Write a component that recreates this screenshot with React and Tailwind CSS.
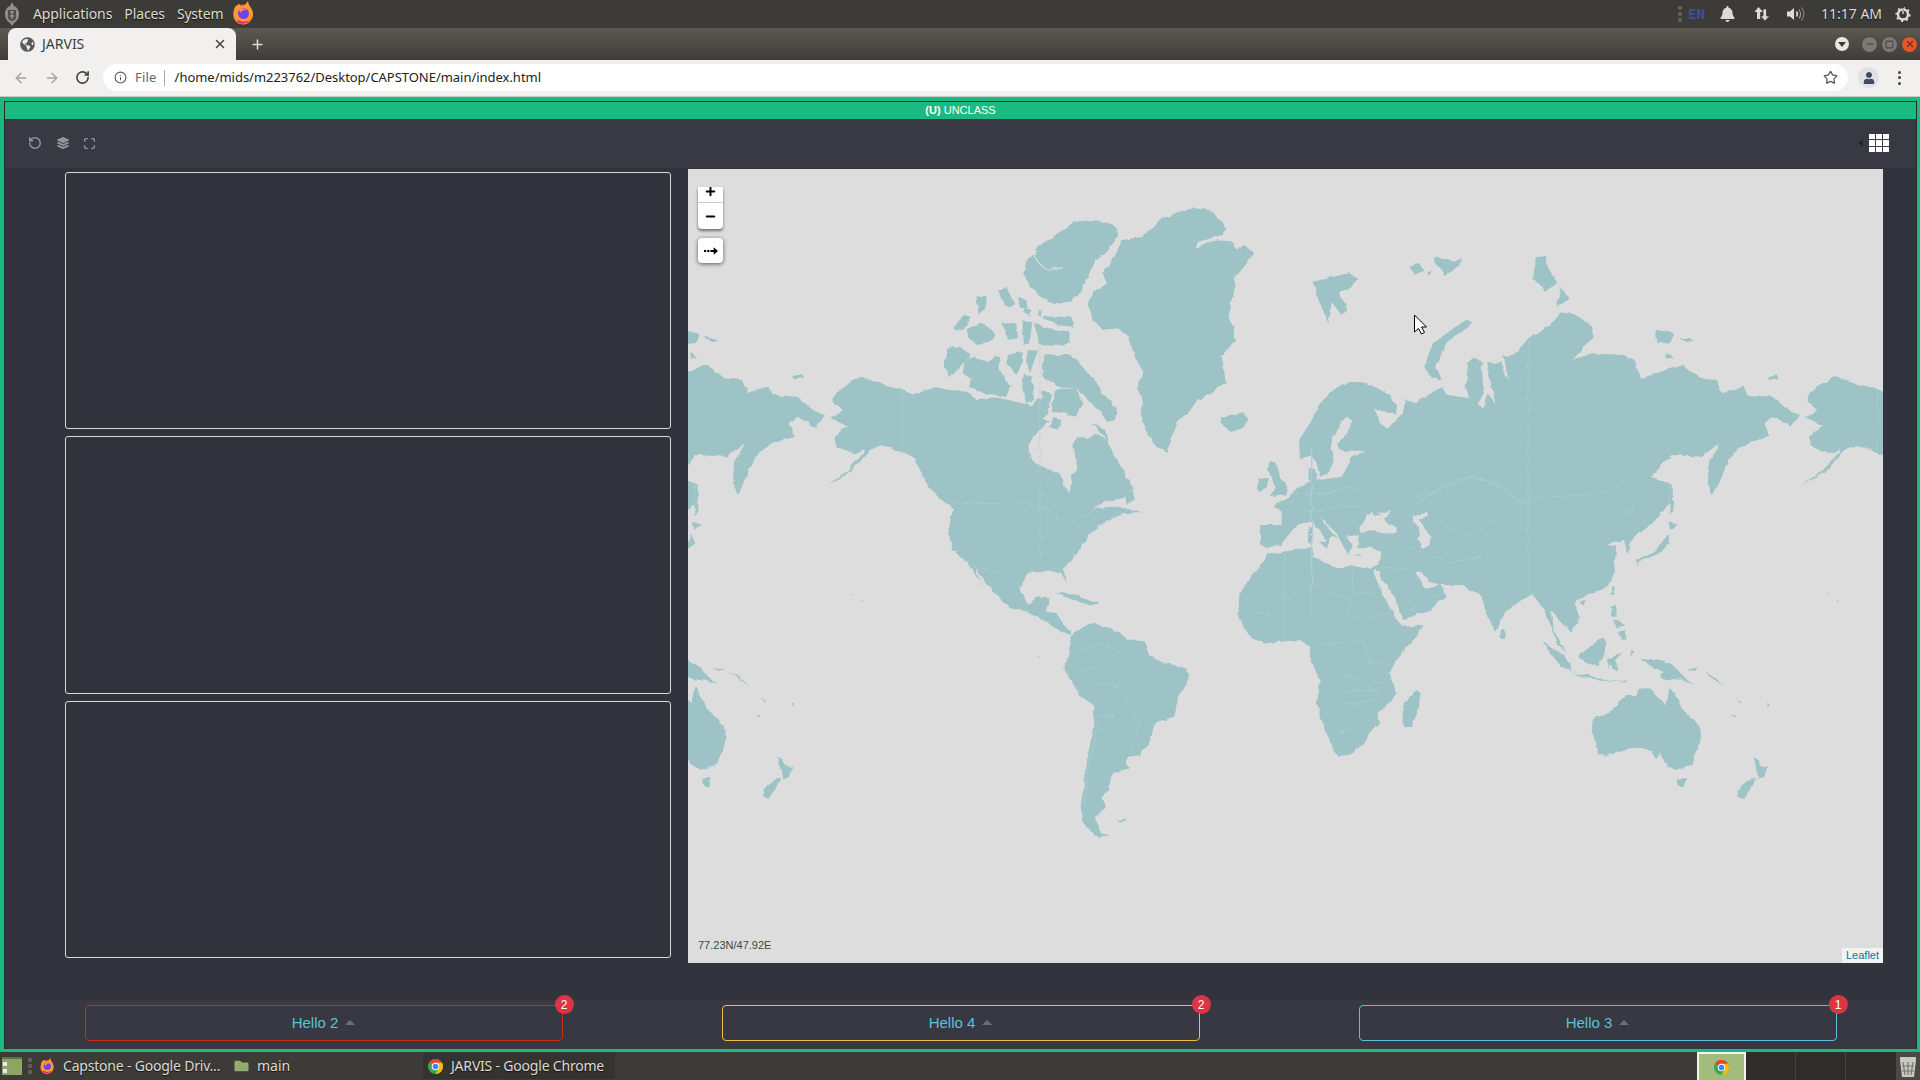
import React from 'react'
import { ArrowLeft, ArrowRight, RotateCw, RotateCcw, Star, X, Plus, Info, Maximize, Minus, Square } from 'lucide-react'
import { FaBell, FaGlobeAmericas, FaLayerGroup, FaUser, FaFolder } from 'react-icons/fa'

// land shapes, traced on crops of the map. each group has its own crop offset/scale
const LAND_Z5 = [
  // greenland
  'M1300,145 1340,150 1365,180 1382,205 1370,225 1345,235 1310,245 1305,265 1340,245 1365,240 1395,245 1405,265 1430,258 1450,280 1430,310 1420,335 1400,350 1405,380 1395,420 1385,470 1400,500 1405,540 1385,570 1370,590 1375,620 1380,670 1340,700 1310,720 1290,750 1255,790 1240,840 1230,875 1205,860 1180,815 1165,760 1170,710 1155,680 1175,640 1150,590 1135,530 1110,505 1070,510 1045,480 1030,430 1045,400 1080,370 1070,340 1090,310 1120,240 1170,230 1215,180 1260,155Z',
  // ellesmere
  'M900,265 955,220 1000,185 1050,180 1095,192 1110,225 1085,268 1055,300 1030,350 1015,395 985,425 950,430 925,420 905,400 885,375 868,340 878,295 900,285Z',
  // arctic islands
  'M690,505 720,465 735,470 725,500 700,515Z',
  'M725,510 765,490 800,520 790,540 750,555 730,530Z',
  'M750,410 775,410 775,445 755,460Z',
  'M805,390 825,385 850,430 835,445 815,425Z',
  'M855,410 875,420 880,445 860,445Z',
  'M815,490 850,490 855,530 830,540Z',
  'M895,490 935,505 985,515 985,550 945,558 910,555Z',
  'M915,470 990,470 995,500 950,495Z',
  'M865,480 890,490 885,550 870,555Z',
  'M870,445 890,450 885,465 870,460Z',
  'M905,450 915,455 912,470 903,465Z',
  'M680,560 715,565 735,590 700,630 680,650 668,620Z',
  'M720,605 745,590 780,610 795,590 810,590 805,620 835,680 825,710 770,700 730,680 740,660 715,640Z',
  'M830,585 865,575 865,610 850,645 825,610Z',
  'M880,570 905,572 885,640 875,600Z',
  'M945,585 990,585 1010,610 1040,650 1070,700 1105,745 1100,780 1080,785 1060,750 1030,720 1000,680 960,680 930,660 915,640 925,590Z',
  'M920,580 945,580 935,640 915,630Z',
  'M870,640 890,650 895,720 875,730 865,680Z',
  'M915,690 940,700 935,745 915,735Z',
  'M945,690 1000,680 1020,730 1000,770 970,760 940,760Z',
  'M945,770 965,780 955,810 935,800Z',
  'M1040,790 1075,810 1085,845 1060,815Z',
  'M1050,860 1085,870 1075,900 1055,895Z',
  // north america
  'M390,705 412,680 455,650 500,668 545,682 592,705 640,680 680,690 720,692 750,718 800,712 860,728 890,735 905,715 925,720 930,760 915,775 935,785 915,805 890,830 880,880 900,912 960,940 972,975 985,1000 992,945 1005,925 995,860 1000,832 1030,838 1050,822 1080,840 1095,880 1130,950 1148,985 1120,1015 1070,1025 1045,1045 1090,1040 1125,1045 1165,1055 1125,1060 1090,1080 1060,1095 1030,1130 1005,1180 970,1225 978,1272 962,1235 925,1235 880,1238 860,1285 880,1335 905,1310 935,1312 925,1355 955,1360 965,1390 990,1415 985,1425 940,1395 885,1360 830,1340 805,1310 770,1265 745,1220 758,1262 778,1297 750,1250 728,1208 690,1170 678,1120 690,1045 650,1010 620,960 590,890 545,870 510,855 480,870 455,905 430,935 395,960 370,975 420,935 445,905 470,870 440,880 395,860 390,830 425,795 378,775 410,750 385,720Z',
  'M1125,1005 1145,990 1150,1020 1130,1035Z',
  'M1060,860 1085,875 1080,900 1055,890Z',
  // st lawrence island and friends
  'M285,650 310,642 312,655 290,658Z',
]

const LAND_Z6 = [
  // siberia to indochina
  'M480,540 470,500 475,430 495,410 510,430 515,520 490,575 510,578 525,520 545,550 530,470 520,425 560,430 580,490 565,410 600,400 630,350 680,320 710,280 745,280 790,320 790,355 740,420 790,400 860,405 890,415 915,475 960,455 1020,435 1060,475 1105,480 1118,520 1170,500 1180,525 1245,530 1285,570 1315,585 1290,620 1245,590 1225,610 1240,650 1190,665 1150,695 1130,730 1095,825 1082,790 1085,730 1115,665 1138,650 1100,680 1065,710 990,705 940,770 985,790 985,850 950,900 890,960 880,1005 870,960 825,970 850,980 845,1050 830,1100 770,1130 745,1150 760,1190 735,1235 700,1190 685,1175 690,1230 725,1300 700,1270 670,1170 640,1120 570,1175 545,1240 510,1135 480,1100 300,800Z',
  // novaya zemlya
  'M470,300 485,310 420,370 395,440 410,480 375,465 365,440 385,370Z',
  // sakhalin, japan
  'M985,790 993,800 995,870 985,885 985,840Z',
  'M980,905 1005,915 985,930Z',
  'M980,940 985,970 960,1000 905,1025 905,1040 900,1020 945,995 970,965Z',
  // severnaya zemlya, svalbard, franz josef
  'M650,110 670,110 680,150 700,190 670,215 640,175Z',
  'M710,200 735,235 700,260Z',
  'M85,185 135,170 175,160 198,175 175,205 150,215 170,270 155,285 130,245 125,310 100,250Z',
  'M330,140 350,130 365,150 340,165Z',
  'M390,110 440,125 460,115 455,135 420,165 395,130Z',
  'M375,155 385,155 382,165 373,163Z',
  // new siberian islands, wrangel
  'M950,330 980,335 1000,345 985,370 955,370Z',
  'M1010,350 1045,360 1030,370Z',
  'M975,395 995,415 975,415Z',
  'M1240,465 1262,470 1245,478Z',
]

const LAND_Z7 = [
  // south america
  'M985,230 1010,205 1040,190 1090,205 1130,235 1175,245 1185,285 1225,310 1270,320 1290,345 1275,385 1260,410 1250,470 1200,490 1190,540 1165,585 1135,590 1130,605 1135,625 1100,635 1090,655 1085,690 1065,710 1075,740 1050,775 1065,820 1085,825 1060,833 1025,800 1012,745 1020,690 1030,600 1045,500 1045,435 1010,405 985,355 972,325 985,275Z',
  'M1110,782 1130,777 1128,787 1112,787Z',
  // cuba, hispaniola, hawaii, galapagos
  'M950,100 990,100 1040,125 1060,135 1020,130 990,118Z',
  'M1030,125 1060,125 1055,135 1035,135Z',
  'M460,120 466,124 462,128Z',
  'M433,100 440,103 436,104Z',
  'M902,289 907,290 904,296Z',
]

const LAND_Z8 = [
  // africa
  'M430,572 450,555 400,565 365,555 320,568 285,545 250,530 248,510 240,500 195,510 130,520 115,520 90,560 55,600 28,645 25,710 60,770 100,790 150,785 210,780 240,800 240,830 270,905 260,965 285,1050 310,1110 320,1130 350,1125 400,1095 430,1045 450,1030 445,1000 490,955 495,940 480,880 500,840 560,770 580,735 522,740 505,725 455,640 430,575Z',
  'M560,930 572,935 565,990 545,1040 525,1042 517,1010 525,970Z',
  // europe and middle east
  'M440,570 455,512 420,503 385,505 385,475 388,462 375,465 350,470 365,495 355,525 335,490 320,460 285,425 265,410 300,450 322,475 300,470 295,495 285,475 270,450 240,425 200,435 172,470 150,495 115,505 90,497 90,435 155,435 155,400 130,378 160,360 185,345 205,320 240,305 232,262 255,268 265,300 335,290 350,265 360,235 408,212 335,212 320,190 350,165 370,118 350,110 335,125 308,170 302,205 312,240 295,280 270,290 258,245 245,225 210,238 207,180 240,130 275,65 320,20 370,3 410,10 470,40 500,75 495,100 450,95 430,85 445,110 450,130 470,145 495,125 520,95 525,60 555,70 590,45 640,20 655,45 720,55 900,200 900,645 860,650 815,705 795,760 755,650 700,615 640,615 610,610 570,575 555,575 585,625 610,625 625,605 650,645 600,690 520,718 490,645Z',
  // med islands
  'M235,440 243,440 243,462 235,462Z',
  'M234,465 243,465 243,487 234,487Z',
  'M268,490 295,483 292,505Z',
  'M360,522 395,522 390,527Z',
  'M425,500 445,497 430,507Z',
  // britain, ireland, iceland, sri lanka
  'M125,240 140,250 150,290 175,320 165,345 120,352 135,325 125,290 110,270Z',
  'M85,295 115,290 115,320 85,335Z',
  'M0,105 40,97 52,118 40,140 5,155 -30,130 -25,115Z',
  'M815,745 825,750 830,775 818,778 810,765Z',
]

const SEA_Z8 = [
  // black sea, azov, caspian
  'M390,440 410,405 430,395 435,410 470,405 460,420 500,445 500,460 460,460 420,450 395,460Z',
  'M445,400 485,392 465,415Z',
  'M550,410 590,395 595,405 565,420 590,450 605,465 600,500 575,505 563,480 570,440 545,425Z',
]

const LAND_Z9 = [
  'M130,245 175,275 215,310 215,333 180,315 150,280Z',
  'M240,280 265,265 300,235 320,245 310,285 295,320 260,310 240,300Z',
  'M325,295 370,280 345,300 355,330 340,330 330,310 325,330Z',
  'M215,338 260,345 330,360 385,358 340,362 260,355Z',
  'M332,140 348,135 350,170 335,170Z',
  'M352,215 375,210 383,238 365,240Z',
  'M340,180 375,195 350,205Z',
  'M338,78 345,80 340,103 332,100Z',
  'M240,125 255,118 252,135Z',
  'M420,295 445,300 490,300 530,325 545,345 578,372 540,358 510,362 480,350 490,335 455,320Z',
  'M360,368 385,358 375,368Z',
  'M393,270 402,275 395,295Z',
  'M612,335 650,355 672,375 650,362Z',
  'M560,330 595,322 585,332Z',
  'M690,458 712,472 700,470Z',
  'M797,433 808,432 803,440Z',
  'M710,410 725,430 718,428Z',
  // australia, tasmania, new zealand
  'M278,478 340,450 355,425 380,405 410,405 415,385 460,390 465,405 500,433 508,380 525,400 545,445 580,480 602,510 600,550 575,615 525,630 495,610 480,575 470,600 458,575 420,560 360,575 315,590 295,585 290,550 275,515Z',
  'M530,655 560,655 550,682 540,680Z',
  'M760,590 775,600 785,620 805,620 790,650 775,655 770,630Z',
  'M755,655 770,655 745,695 730,717 710,708 725,680Z',
]

// fjords and inlets, cut out of the land in the sea colour
const INLETS_Z5 = 'M895,285 C910,320 930,340 965,320 1000,290 M930,340 950,370 965,385 955,415 M925,300 950,295 M975,215 960,250 M1030,205 1010,245 M1205,200 1225,255 M1160,235 1180,265 M1270,170 1300,190 M1310,262 C1340,245 1370,240 1400,250 M1375,250 1370,310 M1340,590 1370,640 M1330,670 1360,650 M1160,640 1175,690 M1395,400 1385,440 M945,600 930,650 M980,590 1000,650 M1000,800 1020,830'
const BORDERS_Z5 = 'M562,690 V870 M690,1030 H880 L950,1060 960,1110 1060,1040 M910,560 V1230 M735,1215 820,1240 860,1275'
const BORDERS_Z6 = 'M628,360 V1120 M330,830 C400,830 430,770 490,770 540,780 570,830 620,850 680,810 780,850 850,800 890,830 910,870 870,890 800,870 M620,850 630,900 730,935 830,880 M395,900 470,960 540,940 600,900 M430,1040 510,980 550,1040 640,1090 M130,690 170,600 210,520 M210,520 260,600 M620,1090 700,1060 740,1130'
const BORDERS_Z7 = 'M1050,370 1100,370 1130,420 1160,490 1140,590 M1045,470 1100,470 M1060,480 1030,640 1022,740 M1000,280 1060,250 1120,280 M1000,340 1050,320'
const BORDERS_Z8 = 'M163,520 V790 M245,545 V630 200,670 200,720 M200,670 110,615 M368,555 V640 H440 M290,630 365,660 350,720 M350,720 480,700 M280,790 320,790 400,780 M290,770 340,730 M400,780 420,850 480,850 M340,880 400,900 480,910 M340,935 450,930 M340,975 440,960 M330,1060 420,1020 M60,700 120,700 M170,345 290,340 360,320 430,340 490,360 M215,400 330,380 390,380 M545,380 610,340 720,290 800,310 880,370 M620,420 700,470 800,420 M530,500 660,550 760,530 M450,560 550,570 M540,690 630,640'

function Shapes({ list, fill, transform }) {
  return (
    <g transform={transform} fill={fill}>
      {list.map((d, i) => <path key={i} d={d} />)}
    </g>
  )
}

function WorldMap() {
  const z5 = 'translate(680 160) scale(0.3954 0.3333)'
  const z6 = 'translate(1280 220) scale(0.3954 0.3333)'
  const z7 = 'translate(680 560) scale(0.3954 0.3333)'
  const z8 = 'translate(1230 380) scale(0.3333)'
  const z9 = 'translate(1500 560) scale(0.3333)'
  return (
    <svg className="block w-full h-full" viewBox="688 169 1195 794">
      <defs>
        {/* roughens the traced outlines into something like a coastline */}
        <filter id="coast" x="-5%" y="-5%" width="110%" height="110%">
          <feTurbulence type="fractalNoise" baseFrequency="0.12" numOctaves="2" seed="4" />
          <feDisplacementMap in="SourceGraphic" scale="4.5" xChannelSelector="R" yChannelSelector="G" />
        </filter>
      </defs>
      <g filter="url(#coast)">
        <g id="land">
          <Shapes list={LAND_Z5} fill="#9dc3c6" transform={z5} />
          <Shapes list={LAND_Z6} fill="#9dc3c6" transform={z6} />
          <Shapes list={LAND_Z7} fill="#9dc3c6" transform={z7} />
          <Shapes list={LAND_Z8} fill="#9dc3c6" transform={z8} />
          <Shapes list={SEA_Z8} fill="#dddddd" transform={z8} />
          <Shapes list={LAND_Z9} fill="#9dc3c6" transform={z9} />
          <path d={INLETS_Z5} transform={z5} fill="none" stroke="#dddddd" strokeWidth="1.2" vectorEffect="non-scaling-stroke" />
          <g fill="none" stroke="#b0d0d3" strokeWidth="0.6">
            <path d={BORDERS_Z5} transform={z5} vectorEffect="non-scaling-stroke" />
            <path d={BORDERS_Z6} transform={z6} vectorEffect="non-scaling-stroke" />
            <path d={BORDERS_Z7} transform={z7} vectorEffect="non-scaling-stroke" />
            <path d={BORDERS_Z8} transform={z8} vectorEffect="non-scaling-stroke" />
          </g>
        </g>
        <use href="#land" x="-975" />
        <use href="#land" x="975" />
      </g>
      {/* mouse cursor */}
      <path d="M1414.5 315 v17 l4 -3.5 l3 5.5 l3 -1.5 l-3 -5.5 h5 Z" fill="#fff" stroke="#000" strokeWidth="1" />
    </svg>
  )
}

function FirefoxIcon({ size = 24 }) {
  return (
    <svg width={size} height={size} viewBox="0 0 24 24" className="shrink-0">
      <circle cx="12" cy="13.5" r="10" fill="#ff7139" />
      <path d="M3 10 C3 5 7 3 9 3 C8 5 9 6 11 6 C13 5 15 3 17 0 C17 3 19 5 21 9 C23 14 21 19 17 22 C13 24 7 24 4 19Z" fill="#ff9a2e" />
      <path d="M5 19 C8 24 16 24 20 18 C18 20 13 22 9 20Z" fill="#f5156c" />
      <circle cx="12.5" cy="12.5" r="5.5" fill="#7542e5" />
      <path d="M8 9 C10 7 14 7 16 9 C13 8 10 10 10 12Z" fill="#ff9a2e" />
    </svg>
  )
}

function ChromeIcon({ size = 16 }) {
  return (
    <svg width={size} height={size} viewBox="0 0 24 24" className="shrink-0">
      <circle cx="12" cy="12" r="12" fill="#34a853" />
      <path d="M12 0 A12 12 0 0 1 22.4 6 H12 A6 6 0 0 0 6.8 9 L1.6 6 A12 12 0 0 1 12 0Z" fill="#ea4335" />
      <path d="M22.4 6 A12 12 0 0 1 12 24 L17.2 15 A6 6 0 0 0 17.2 9 L12 6Z" fill="#fbbc04" />
      <circle cx="12" cy="12" r="6" fill="#fff" />
      <circle cx="12" cy="12" r="4.5" fill="#4285f4" />
    </svg>
  )
}

function Emblem() {
  return (
    <svg width="14" height="24" viewBox="0 0 14 24" className="shrink-0">
      <path d="M7 0 L9 4 C12 5 14 8 14 12 C14 17 11 20 9 21 L7 24 L5 21 C3 20 0 17 0 12 C0 8 2 5 5 4Z" fill="#8f8e88" />
      <path d="M3 8 H11 V16 C10 18 8 19 7 19 C6 19 4 18 3 16Z" fill="#4e4d48" />
      <path d="M5 10 H9 M7 9 V17 M4.5 14 H9.5" stroke="#a8a7a0" strokeWidth="1" />
    </svg>
  )
}

function TrayIcons() {
  return (
    <div className="flex items-center text-[#dfdbd2]">
      <div className="w-[4px] h-[16px] flex flex-col justify-between mr-[6px]">
        <span className="h-[4px] bg-[#5e5d58]" />
        <span className="h-[4px] bg-[#5e5d58]" />
        <span className="h-[4px] bg-[#5e5d58]" />
      </div>
      <span className="w-[30px] font-['DejaVu_Sans_Mono',monospace] font-bold text-[14px] text-[#3f4f9a] [text-shadow:none]">EN</span>
      <FaBell className="w-[15px] h-[16px] ml-[2px]" />
      <svg width="16" height="16" viewBox="0 0 16 16" className="ml-[19px]" fill="#dfdbd2">
        <path d="M4.5 1 L9 6 H6.2 V13 H3 V6 H0.5Z" />
        <path d="M11 15 L6.5 10 H9 V3 H12.5 V10 H15.5Z" stroke="#3c3b37" strokeWidth="0.7" />
      </svg>
      <svg width="19" height="16" viewBox="0 0 19 16" className="ml-[17px]" fill="none" stroke="#dfdbd2">
        <path d="M0 5.5 H3 L7 2 V14 L3 10.5 H0Z" fill="#dfdbd2" stroke="none" />
        <path d="M9.5 5.5 C10.5 7 10.5 9 9.5 10.5" strokeWidth="1.5" />
        <path d="M12 3.5 C14 6 14 10 12 12.5" strokeWidth="1.1" stroke="#a8a69e" />
        <path d="M14.5 1.5 C17.5 5.5 17.5 10.5 14.5 14.5" strokeWidth="1.1" stroke="#8a8880" />
      </svg>
      <span className="ml-[15px] w-[58px] -mt-[2px] font-['Noto_Sans',sans-serif] text-[14px] whitespace-nowrap">11:17 AM</span>
      <svg width="16" height="16" viewBox="0 0 16 16" className="ml-[16px]" fill="none" stroke="#dfdbd2">
        <circle cx="8" cy="8.5" r="5" strokeWidth="2.4" />
        <circle cx="8" cy="8.5" r="6.7" strokeWidth="1.8" strokeDasharray="2 3.2" />
        <path d="M8 1 V8" strokeWidth="2" stroke="#3c3b37" />
        <path d="M8 2 V8" strokeWidth="1.4" />
      </svg>
    </div>
  )
}

function TopPanel() {
  return (
    <div className="h-[28px] shrink-0 bg-[#3c3b37] flex items-center justify-between pl-[5px] pr-[9px] font-['Noto_Sans',sans-serif] text-[14px] text-[#dfdbd2] [text-shadow:0_1px_1px_#111]">
      <div className="flex items-center">
        <Emblem />
        <span className="ml-[14px] -mt-[2px] tracking-[-0.1px]">Applications</span>
        <span className="ml-[12px] -mt-[2px] tracking-[-0.1px]">Places</span>
        <span className="ml-[12px] -mt-[2px] tracking-[-0.2px]">System</span>
        <span className="ml-[8px] -mt-[2px]"><FirefoxIcon size={24} /></span>
      </div>
      <TrayIcons />
    </div>
  )
}

function WindowBtn({ color, children }) {
  return (
    <div className={`w-[17px] h-[17px] rounded-full flex items-center justify-center border border-[#44433e] ${color}`}>
      {children}
    </div>
  )
}

function TabBar() {
  return (
    <div className="h-[32px] shrink-0 bg-gradient-to-b from-[#5c5950] to-[#3e3d38] flex items-end pl-[8px] pr-[2px]">
      <div className="w-[228px] h-[32px] bg-[#f1f0ee] rounded-t-[8px] flex items-center pl-[12px] pr-[9px] font-['Noto_Sans',sans-serif] text-[14px] text-[#3c3c3c]">
        <FaGlobeAmericas className="w-[15px] h-[15px] text-[#55585d]" />
        <span className="ml-[7px] -mt-[2px]">JARVIS</span>
        <X className="ml-auto w-[14px] h-[14px] text-[#444]" strokeWidth={2.5} />
      </div>
      <Plus className="ml-[14px] mb-[8px] w-[15px] h-[15px] text-[#dedcd5]" strokeWidth={2.5} />
      <div className="ml-auto h-full flex items-center gap-[3px]">
        <div className="w-[14px] h-[14px] rounded-full bg-[#e8e6e1] flex items-center justify-center mr-[9px]">
          <span className="border-x-[4px] border-x-transparent border-t-[5px] border-t-[#3c3b37]" />
        </div>
        <WindowBtn color="bg-[#7b7a74]"><Minus className="w-[10px] h-[10px] text-[#4a4944]" strokeWidth={3} /></WindowBtn>
        <WindowBtn color="bg-[#7b7a74]"><Square className="w-[9px] h-[9px] text-[#4a4944]" strokeWidth={3} /></WindowBtn>
        <WindowBtn color="bg-[#e2572a]"><X className="w-[10px] h-[10px] text-[#77311c]" strokeWidth={3} /></WindowBtn>
      </div>
    </div>
  )
}

function AddressBar() {
  return (
    <div className="h-[37px] shrink-0 bg-[#f1f0ee] border-b border-[#c9c9c9] flex items-center pl-[13px] pr-[17px] pb-[1px]">
      <ArrowLeft className="w-[16px] h-[16px] text-[#a4a4a4]" strokeWidth={2.2} />
      <ArrowRight className="ml-[15px] w-[16px] h-[16px] text-[#a4a4a4]" strokeWidth={2.2} />
      <RotateCw className="ml-[15px] w-[15px] h-[15px] text-[#444]" strokeWidth={2.6} />
      <div className="ml-[13px] w-[1745px] h-[27px] bg-white rounded-full flex items-center pl-[11px] pr-[10px] font-['Noto_Sans',sans-serif] text-[13px]">
        <Info className="w-[13px] h-[13px] text-[#555]" strokeWidth={2} />
        <span className="ml-[8px] text-[#666] tracking-[0.2px]">File</span>
        <span className="ml-[7px] w-px h-[16px] bg-[#aaa]" />
        <span className="ml-[10px] text-[#222] tracking-[-0.03px]">/home/mids/m223762/Desktop/CAPSTONE/main/index.html</span>
        <Star className="ml-auto w-[15px] h-[15px] text-[#555]" strokeWidth={2} />
      </div>
      <div className="ml-[10px] w-[21px] h-[21px] rounded-full bg-[#dfe1e7] flex items-center justify-center">
        <FaUser className="w-[12px] h-[12px] text-[#3f4a5f]" />
      </div>
      <div className="ml-[19px] flex flex-col gap-[2.5px]">
        <span className="w-[3px] h-[3px] rounded-full bg-[#444]" />
        <span className="w-[3px] h-[3px] rounded-full bg-[#444]" />
        <span className="w-[3px] h-[3px] rounded-full bg-[#444]" />
      </div>
    </div>
  )
}

function Toolbar() {
  return (
    <div className="h-[49px] shrink-0 bg-[#383943] pb-[1px] flex items-center pl-[23px] pr-[27px] text-[#94959b]">
      <RotateCcw className="w-[14px] h-[14px]" strokeWidth={2.6} />
      <FaLayerGroup className="ml-[15px] w-[12px] h-[12px]" />
      <Maximize className="ml-[14px] w-[13px] h-[13px]" strokeWidth={2.4} />
      <span className="ml-auto border-y-[4px] border-y-transparent border-r-[5px] border-r-[#24252c]" />
      <div className="ml-[6px] w-[20px] h-[18px] grid grid-cols-3 grid-rows-3 gap-[1px] bg-[#3a3c4a]">
        {[0, 1, 2, 3, 4, 5, 6, 7, 8].map(i => <span key={i} className="bg-white" />)}
      </div>
    </div>
  )
}

function MapControls() {
  return (
    <div className="absolute left-[10px] top-[18px] w-[25px] font-['Liberation_Sans',sans-serif] text-black">
      <div className="rounded-b-[4px] bg-white shadow-[0_2px_3px_rgba(0,0,0,0.5)] overflow-hidden">
        <div className="h-[16px] border-b border-[#ccc] flex justify-center">
          <Plus className="w-[13px] h-[13px] -mt-[2px]" strokeWidth={3.6} />
        </div>
        <div className="h-[26px] flex items-center justify-center">
          <Minus className="w-[13px] h-[13px]" strokeWidth={3.6} />
        </div>
      </div>
      <div className="mt-[9px] h-[25px] rounded-[4px] bg-white shadow-[0_1px_4px_rgba(0,0,0,0.6)] flex items-center justify-center">
        <svg width="14" height="10" viewBox="0 0 13 9">
          <path d="M0 3.5 H2 V5.5 H0Z M3 3.5 H5 V5.5 H3Z M6 3.5 H9 V1 L13 4.5 L9 8 V5.5 H6Z" fill="#000" />
        </svg>
      </div>
    </div>
  )
}

function MapPanel() {
  return (
    <div className="relative w-[1195px] h-[794px] bg-[#dddddd] overflow-hidden">
      <WorldMap />
      <MapControls />
      <span className="absolute left-[10px] bottom-[10px] font-['Liberation_Sans',sans-serif] text-[11px] text-[#444]">77.23N/47.92E</span>
      <span className="absolute right-0 bottom-0 h-[15px] px-[4px] bg-[#f2f2f2] font-['Liberation_Sans',sans-serif] text-[11px] leading-[15px] text-[#0078a8]">Leaflet</span>
    </div>
  )
}

function FooterButton({ label, count, border }) {
  return (
    <div className={`relative w-[478px] h-[36px] mt-[5px] rounded-[4px] border flex items-center justify-center gap-[7px] font-['Liberation_Sans',sans-serif] text-[15px] text-[#5bc0de] ${border}`}>
      {label}
      <span className="border-x-[5px] border-x-transparent border-b-[5px] border-b-[#6c6f79] mb-[2px]" />
      <span className="absolute -right-[12px] -top-[11px] w-[19px] h-[19px] rounded-full bg-[#dc3545] text-white text-[12px] flex items-center justify-center">{count}</span>
    </div>
  )
}

function Taskbar() {
  return (
    <div className="h-[28px] shrink-0 bg-[#3c3b37] flex items-stretch font-['Noto_Sans',sans-serif] text-[14px] text-[#dfdbd2] [text-shadow:0_1px_1px_#111]">
      <div className="w-[28px] flex items-center pl-[2px]">
        <div className="w-[20px] h-[18px] bg-[#8ba565] border-t-2 border-[#5f6f48] flex flex-col justify-center gap-[3px] pl-[1px]">
          <span className="w-[4px] h-[4px] bg-[#e9eee0]" />
          <span className="w-[4px] h-[4px] bg-[#e9eee0]" />
        </div>
      </div>
      <div className="w-[4px] my-[6px] flex flex-col justify-between">
        <span className="h-[4px] bg-[#5e5d58]" />
        <span className="h-[4px] bg-[#5e5d58]" />
        <span className="h-[4px] bg-[#5e5d58]" />
      </div>
      <div className="w-[199px] flex items-center pl-[7px]">
        <FirefoxIcon size={16} />
        <span className="ml-[8px] -mt-[2px] whitespace-nowrap tracking-[-0.2px]">Capstone - Google Driv...</span>
      </div>
      <div className="w-[192px] flex items-center pl-[3px]">
        <FaFolder className="w-[15px] h-[14px] text-[#94ab6f]" />
        <span className="ml-[8px] -mt-[2px]">main</span>
      </div>
      <div className="w-[192px] my-[1px] rounded-[2px] bg-[#34332f] flex items-center pl-[5px]">
        <ChromeIcon size={15} />
        <span className="ml-[8px] -mt-[2px] whitespace-nowrap tracking-[-0.2px]">JARVIS - Google Chrome</span>
      </div>
      <div className="flex-1" />
      <div className="w-[49px] bg-[#a3bc7c] border-2 border-[#f2f2ee] border-b-0 flex items-center justify-center">
        <ChromeIcon size={15} />
      </div>
      <div className="w-[50px] bg-[#2e2d29] border-r border-[#44433f]" />
      <div className="w-[50px] bg-[#2e2d29] border-r border-[#44433f]" />
      <div className="w-[50px] bg-[#2e2d29]" />
      <div className="w-[24px] bg-[#4a4944] flex items-center justify-center">
        <svg width="18" height="24" viewBox="0 0 18 24">
          <path d="M1 3 H17 V6 L15 23 H3 L1 6Z" fill="#c9c9c4" />
          <path d="M4 8 L6 21 M9 8 V21 M14 8 L12 21 M3 12 H15 M3 17 H15" stroke="#77766f" strokeWidth="1.2" />
        </svg>
      </div>
    </div>
  )
}

export default function App() {
  return (
    <div className="h-screen w-full overflow-hidden flex flex-col bg-[#33343e]">
      <TopPanel />
      <TabBar />
      <AddressBar />
      <div className="flex-1 min-h-0 bg-[#1cb981] pt-[4px] pl-[4px] pr-[3px] pb-[3px] flex flex-col">
        <div className="flex-1 min-h-0 flex flex-col border-t border-x border-[#2a2b30] bg-[#32333d]">
          <div className="h-[17px] shrink-0 bg-[#1cb981] flex items-center justify-center font-['Liberation_Sans',sans-serif] text-[11px] text-white">
            <b>(U)</b>&nbsp;UNCLASS
          </div>
          <Toolbar />
          <div className="flex-1 min-h-0 flex pt-[1px] pl-[60px]">
            <div className="w-[606px] h-[786px] mt-[3px] flex flex-col gap-[7px]">
              <div className="flex-1 rounded-[3px] border border-[#d8d8d8]" />
              <div className="flex-1 rounded-[3px] border border-[#d8d8d8]" />
              <div className="flex-1 rounded-[3px] border border-[#d8d8d8]" />
            </div>
            <div className="ml-[17px]"><MapPanel /></div>
          </div>
          <div className="h-[49px] shrink-0 bg-[#373841] flex justify-around">
            <FooterButton label="Hello 2" count="2" border="border-[#c8320f]" />
            <FooterButton label="Hello 4" count="2" border="border-[#f0c040]" />
            <FooterButton label="Hello 3" count="1" border="border-[#5bc0de]" />
          </div>
        </div>
      </div>
      <Taskbar />
    </div>
  )
}
